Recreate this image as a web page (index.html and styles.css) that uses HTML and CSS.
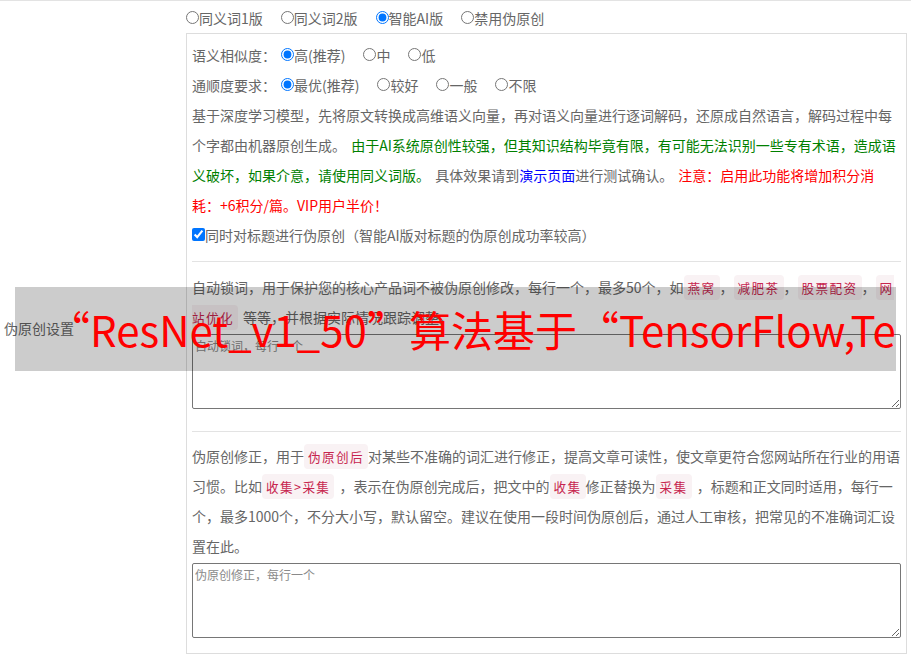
FILE: index.html
```html
<!DOCTYPE html>
<html lang="zh-CN">
<head>
<meta charset="utf-8">
<title>伪原创设置</title>
<link rel="stylesheet" href="styles.css">
</head>
<body>
<div class="row">
  <div class="row-label">伪原创设置</div>
  <div class="row-field">
    <div class="modes"><label class="opt"><input type="radio" name="mode">同义词1版</label><label class="opt"><input type="radio" name="mode">同义词2版</label><label class="opt"><input type="radio" name="mode" checked>智能AI版</label><label class="opt"><input type="radio" name="mode">禁用伪原创</label></div>
    <div class="panel">
      <div class="line">语义相似度：<label class="opt"><input type="radio" name="sim" checked>高(推荐)</label><label class="opt"><input type="radio" name="sim">中</label><label class="opt"><input type="radio" name="sim">低</label></div>
      <div class="line">通顺度要求：<label class="opt"><input type="radio" name="flu" checked>最优(推荐)</label><label class="opt"><input type="radio" name="flu">较好</label><label class="opt"><input type="radio" name="flu">一般</label><label class="opt"><input type="radio" name="flu">不限</label></div>
      <p class="desc">基于深度学习模型，先将原文转换成高维语义向量，再对语义向量进行逐词解码，还原成自然语言，解码过程中每个字都由机器原创生成。 <span class="green">由于AI系统原创性较强，但其知识结构毕竟有限，有可能无法识别一些专有术语，造成语义破坏，如果介意，请使用同义词版。</span> 具体效果请到<a class="blue">演示页面</a>进行测试确认。 <span class="red">注意：启用此功能将增加积分消耗：+6积分/篇。VIP用户半价！</span></p>
      <div class="line"><label class="check"><input type="checkbox" checked>同时对标题进行伪原创（智能AI版对标题的伪原创成功率较高）</label></div>
      <hr class="sep">
      <p class="desc">自动锁词，用于保护您的核心产品词不被伪原创修改，每行一个，最多50个，如<code>燕窝</code>，<code>减肥茶</code>，<code>股票配资</code>，<code>网站优化</code> 等等，并根据实际情况跟踪调整。</p>
      <textarea placeholder="自动锁词，每行一个"></textarea>
      <hr class="sep sep2">
      <p class="desc">伪原创修正，用于<code>伪原创后</code>对某些不准确的词汇进行修正，提高文章可读性，使文章更符合您网站所在行业的用语习惯。比如<code>收集&gt;采集</code> ，表示在伪原创完成后，把文中的<code>收集</code>修正替换为<code>采集</code> ，标题和正文同时适用，每行一个，最多1000个，不分大小写，默认留空。建议在使用一段时间伪原创后，通过人工审核，把常见的不准确词汇设置在此。</p>
      <textarea placeholder="伪原创修正，每行一个"></textarea>
    </div>
  </div>
</div>
<div class="banner">“ResNet_v1_50”算法基于“TensorFlow,TensorFlow”</div>
</body>
</html>
```

FILE: styles.css
```css
body {
  margin: 0;
  font-family: "Noto Sans CJK SC", sans-serif;
  font-size: 14px;
  color: #666;
  background: #fff;
}

.row {
  display: flex;
  align-items: center;
  border-top: 1px solid #e3e3e3;
}

.row-label {
  width: 181px;
  flex: none;
  padding-left: 4px;
  box-sizing: border-box;
}

.row-field {
  flex: 1;
  min-width: 0;
}

.modes {
  padding-top: 2px;
  height: 30px;
  line-height: 30px;
}

.opt {
  margin-right: 13px;
}

.opt input[type="radio"] {
  margin: 3px 0 0 5px;
}

.panel {
  margin-left: 5px;
  width: 721px;
  box-sizing: border-box;
  border: 1px solid #ddd;
  padding: 6px 5px 15px 5px;
}

.line {
  height: 30px;
  line-height: 30px;
  white-space: nowrap;
}

.check input {
  margin: 0;
}

.desc {
  margin: 0;
  line-height: 30px;
  word-spacing: 2px;
}

.green {
  color: #008000;
}

.blue {
  color: #0000ff;
}

.red {
  color: #ff0000;
}

code {
  font-family: "Noto Sans CJK SC", sans-serif;
  font-size: 12.6px;
  line-height: 1;
  letter-spacing: 1.4px;
  color: #c7254e;
  background: #f9f2f4;
  padding: 3px 4px;
  border-radius: 4px;
}

.sep {
  border: 0;
  border-top: 1px solid #e3e3e3;
  margin: 11px 0 10px;
}

.sep2 {
  margin: 22px 0 9px;
}

textarea {
  display: block;
  width: 100%;
  height: 75px;
  box-sizing: border-box;
  margin: 2px 0 0;
  padding: 2px;
  border: 1px solid #767676;
  border-radius: 2px;
  font-family: "Noto Sans CJK SC", sans-serif;
  font-size: 12px;
}

textarea::placeholder {
  color: #8a8a8a;
}

.banner {
  position: absolute;
  left: 15px;
  top: 287px;
  width: 881px;
  height: 84px;
  box-sizing: border-box;
  padding-left: 33px;
  background: rgba(0, 0, 0, 0.2);
  color: #ff0000;
  font-family: "Noto Sans CJK SC", sans-serif;
  font-size: 42px;
  line-height: 84px;
  white-space: nowrap;
  overflow: hidden;
}
```
